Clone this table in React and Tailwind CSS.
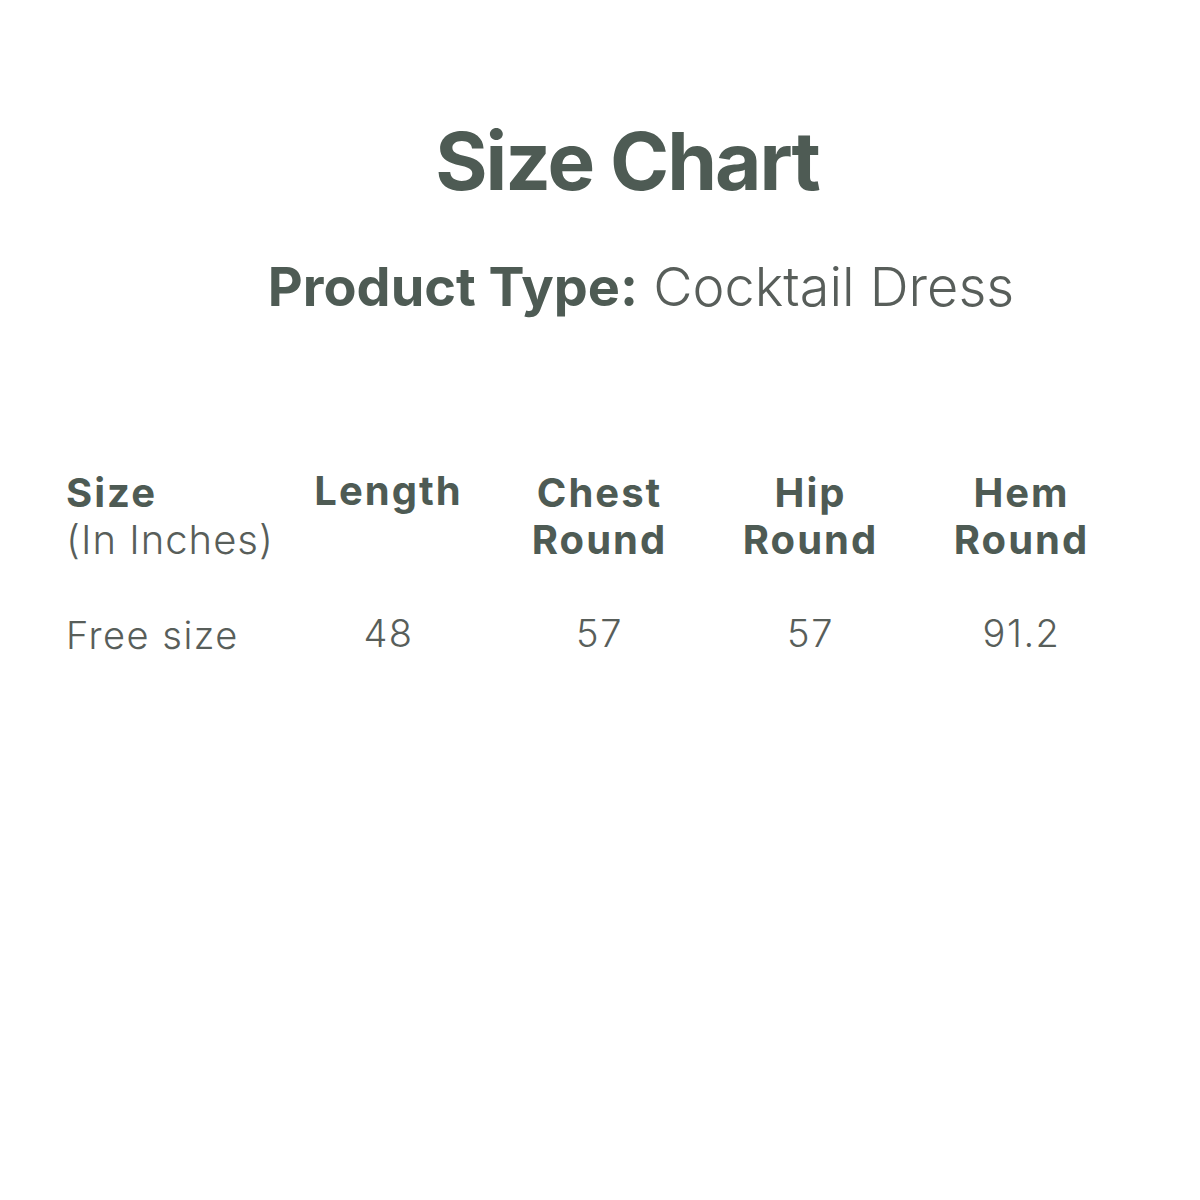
export default function App() {
  const cols = [
    { a: "Length", b: "", v: "48", s: "" },
    { a: "Chest", b: "Round", v: "57", s: "-mt-[3px]" },
    { a: "Hip", b: "Round", v: "57", s: "mt-[2px]" },
    { a: "Hem", b: "Round", v: "91.2", s: "" },
  ];
  return (
    <div className="w-[1200px] h-[1200px] bg-white overflow-hidden" style={{ fontFamily: "Inter, 'Open Sans', sans-serif" }}>
      <div className="pt-[121px] flex justify-center pl-[54px]">
        <h1 className="text-[80px] leading-none font-bold tracking-[-2px] text-[#4e5b54]">Size Chart</h1>
      </div>
      <div className="mt-[59px] flex justify-center pl-[82px]">
        <p className="text-[54px] leading-none text-[#585e5a]">
          <span className="font-bold text-[#4e5b54]">Product Type:</span>{" "}
          <span className="font-light">Cocktail Dress</span>
        </p>
      </div>
      <div className="mt-[155px] pl-[66px] grid grid-cols-[217px_211px_211px_211px_211px] text-[40px] leading-[47px]">
        <div>
          <div className="font-bold tracking-[2px] text-[#4e5b54]">Size</div>
          <div className="font-light tracking-[1px] text-[#585e5a]">(In Inches)</div>
        </div>
        {cols.map((c) => (
          <div key={c.a} className={`text-center font-bold tracking-[2px] text-[#4e5b54] ${c.a === "Length" ? "-mt-[2px]" : ""}`}>
            <div>{c.a}</div>
            <div>{c.b}</div>
          </div>
        ))}
        <div className="mt-[49px] text-[38px] tracking-[1.5px] font-light text-[#585e5a]">Free size</div>
        {cols.map((c) => (
          <div key={c.a + "v"} className="mt-[47px] text-center text-[38px] tracking-[1.5px] font-light text-[#585e5a]">{c.v}</div>
        ))}
      </div>
    </div>
  );
}
